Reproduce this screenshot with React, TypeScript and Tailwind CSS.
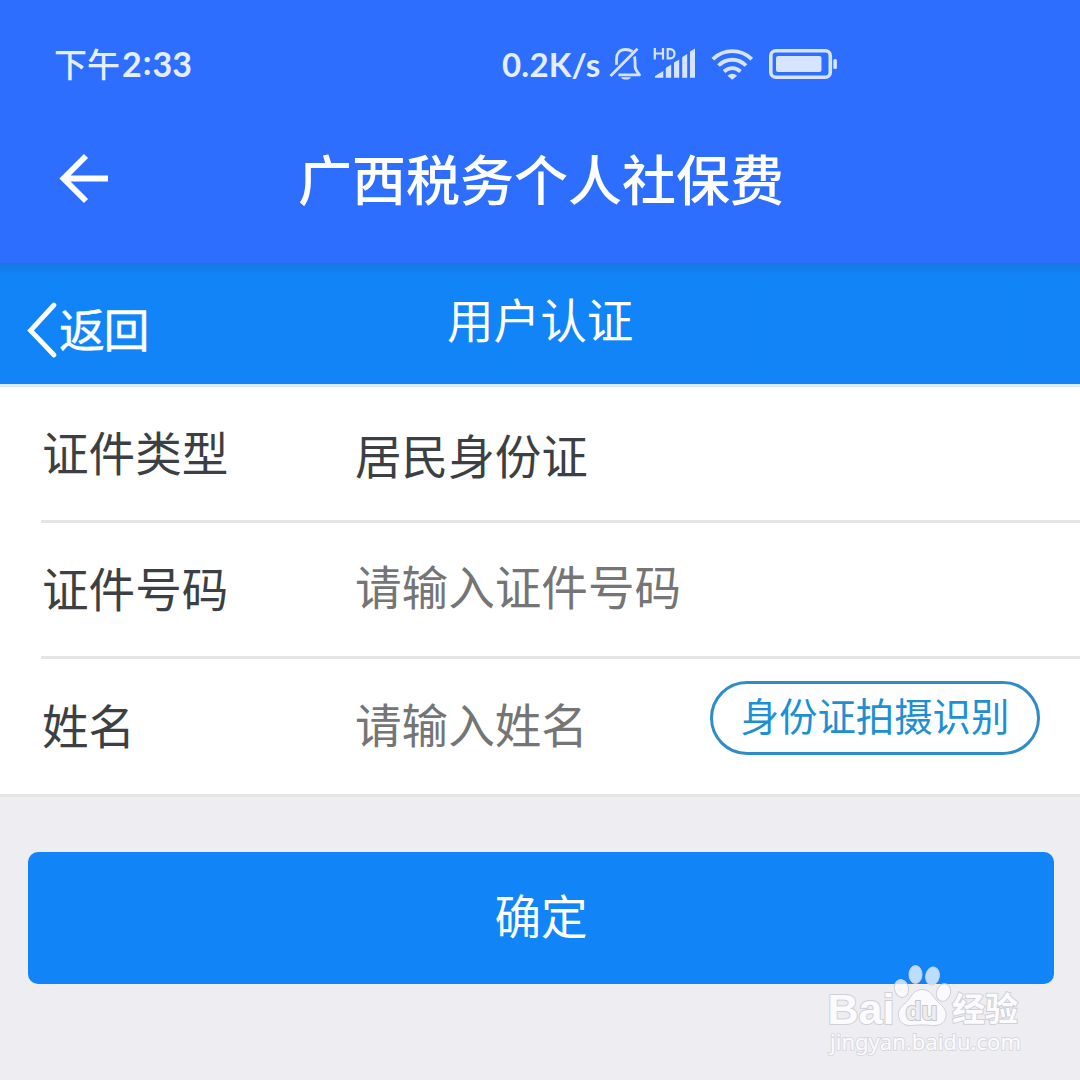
import React, { useState } from 'react';

const StatusIcons = () => (
  <div className="flex items-center">
    {/* muted bell */}
    <svg className="ml-[8px] h-[34px] w-[33px]" viewBox="609 47 33 34" fill="none" stroke="#d6e4ff" strokeWidth="2.8">
      <path d="M632.500 51.500C630 49.800 628 49.500 625.500 49.500c-5.800 0-9 4.200-9 9.700v5.500" />
      <path d="M634.500 56.500c.6 2 .6 6.500.6 10 0 3.500 2.400 5.500 4.400 8.400H618.500" strokeLinejoin="round" />
      <path d="M637.500 48.800L610.500 76" />
      <path d="M621 77.200h10c-1 3.200-9 3.200-10 0z" fill="#d6e4ff" stroke="none" />
    </svg>
    {/* HD signal */}
    <svg className="ml-[11px] h-[34px] w-[43px]" viewBox="653 47 43 34" fill="#d6e4ff">
      <g fill="none" stroke="#d6e4ff" strokeWidth="2.2">
        <path d="M654.800 48v11.500M663 48v11.500M654.800 53.500h8.200" />
        <path d="M667.700 49.100v9.300h2.300c6 0 6-9.300 0-9.300z" />
      </g>
      <path d="M655 77.800v-1.800l8.300-5V77.800zM665.800 77.800V68l5.400-3.500V77.800zM674 77.800V62.500l5.200-3V77.800zM682.200 77.800V57l5-3V77.800zM690 77.800V51.500l5-3V77.800z" />
    </svg>
    {/* wifi */}
    <svg className="ml-[15px] h-[34px] w-[43px]" viewBox="711 47 43 34" fill="none" stroke="#d6e4ff" strokeWidth="3.800">
      <path d="M712.800 59.200c11.200-10.700 27.800-10.700 39 0" />
      <path d="M718.500 65.500c8-7.700 19.500-7.700 27.500 0" />
      <path d="M724 71.500c5-4.600 11.600-4.600 16.500 0" />
      <path d="M727.500 75.800c2.800-2.800 6.800-2.800 9.600 0l-4.800 4z" fill="#d6e4ff" stroke="none" />
    </svg>
    {/* battery */}
    <svg className="ml-[14px] h-[34px] w-[71px]" viewBox="768 47 71 34">
      <rect x="770.800" y="50.800" width="59.500" height="26.500" rx="5" fill="none" stroke="#d6e4ff" strokeWidth="3.600" />
      <rect x="776" y="56" width="45.500" height="16" rx="2" fill="#d6e4ff" />
      <rect x="833.300" y="59" width="3.600" height="10" rx="1.600" fill="#d6e4ff" />
    </svg>
  </div>
);

const Watermark = () => (
  <svg className="absolute left-[820px] top-[955px] h-[110px] w-[215px]" viewBox="820 955 215 110">
    <g fill="#ffffff" fillOpacity="0.72" stroke="#cfcfd8" strokeWidth="1">
      <ellipse cx="901.500" cy="988.500" rx="7" ry="9" transform="rotate(-14 901.500 988.500)" />
      <ellipse cx="915.500" cy="974.500" rx="6.500" ry="9" />
      <ellipse cx="932.500" cy="976" rx="6.800" ry="9" transform="rotate(12 932.500 976)" />
      <ellipse cx="943.500" cy="992.500" rx="7" ry="9" transform="rotate(18 943.500 992.500)" />
      <path d="M922 989.500c-9 0-10.500 8-16 13-5.500 4.500-8.500 8-7.500 14 1.500 8 8.500 9.500 14 9 7-.8 12-.8 19 0 6 .6 13-1 14.500-9 1-6-2.500-9.500-7.500-14-5.500-5-7.500-13-16.500-13z" />
    </g>
    <g fill="#fbfbfd" stroke="#cfcfd8" strokeWidth="2" paintOrder="stroke" fontFamily="'Liberation Sans', Arial, sans-serif" fontWeight="700">
      <text x="827.500" y="1023.500" fontSize="42" textLength="67" lengthAdjust="spacingAndGlyphs">Bai</text>
      <text x="905.500" y="1020" fontSize="26" textLength="32" lengthAdjust="spacingAndGlyphs" fill="#ececf1" stroke="#c6c7ce">du</text>
      <text x="952" y="1021" fontSize="33" fontFamily="'Noto Sans CJK SC', sans-serif">经验</text>
    </g>
    <text
      x="830" y="1050" fontSize="22" textLength="191" lengthAdjust="spacingAndGlyphs"
      fontFamily="'Noto Sans', sans-serif" fill="#fbfbfd" stroke="#d8d8df" strokeWidth="2" paintOrder="stroke"
    >jingyan.baidu.com</text>
  </svg>
);

interface FieldRowProps {
  label: string;
  last?: boolean;
  children: React.ReactNode;
}

const FieldRow: React.FC<FieldRowProps> = ({ label, last, children }) => (
  <div className={last ? 'flex h-[135px] items-center' : 'flex h-[136px] items-center border-b-3 border-[#e5e5e5]'}>
    <span className="w-[314px] shrink-0 pb-[6px] pl-px">{label}</span>
    {children}
  </div>
);

const inputClass = 'h-[70px] min-w-0 bg-transparent outline-none placeholder:text-[#757575] placeholder:opacity-100';

export default function App() {
  const [idNumber, setIdNumber] = useState('');
  const [name, setName] = useState('');

  return (
    <div className="relative flex h-[1080px] w-[1080px] flex-col overflow-hidden bg-[#eeeef2] font-['Noto_Sans_CJK_SC',sans-serif] text-[46.6px] leading-[70px] text-[#3c3f43]">
      <header className="h-[263px] shrink-0 bg-[#2d6eff]">
        <div className="flex h-[128px] items-center text-[#e4eeff]">
          <span className="flex w-[502px] items-center pl-[54px] font-['Lato','Noto_Sans_CJK_SC',sans-serif] text-[33px] font-medium">
            下午
            <span className="ml-[2px] text-[34px] font-bold">2</span>
            <span className="mx-px mb-[5px] text-[34px] font-bold">:</span>
            <span className="text-[34px] font-bold">33</span>
          </span>
          <span className="w-[99px] font-['Lato','Noto_Sans_CJK_SC',sans-serif] text-[33px] font-bold tracking-[0.2px] whitespace-nowrap">0.2K/s</span>
          <StatusIcons />
        </div>
        <div className="flex h-[100px] items-center text-white">
          <button className="ml-[58px] w-[240px]">
            <svg className="h-[52px] w-[52px]" viewBox="0 0 52 52" fill="none" stroke="currentColor" strokeWidth="5.800">
              <path d="M28 4L5.500 26.500l22.500 22.500M6 26.500H50" />
            </svg>
          </button>
          <h1 className="text-[54px] font-medium">广西税务个人社保费</h1>
        </div>
      </header>

      <nav className="flex h-[121px] shrink-0 bg-[#1184f8] bg-linear-to-b from-[#1777df] from-0% to-[#1184f8] to-[12px] text-white">
        <button className="flex w-[447px] items-center pt-[13px] pl-[26px]">
          <svg className="h-[58px] w-[32px]" viewBox="0 0 32 58" fill="none" stroke="currentColor" strokeWidth="4.800" strokeLinecap="round">
            <path d="M28 4L4.500 29.500 28 54" />
          </svg>
          <span className="ml-px pb-[6px] text-[46px] tracking-[-1.400px] [-webkit-text-stroke:0.4px_white]">返回</span>
        </button>
        <h2 className="pt-[20px]">用户认证</h2>
      </nav>

      <section className="h-[413px] shrink-0 border-y-3 border-t-[#dcecf8] border-b-[#e5e5e5] bg-white pl-[41px]">
        <FieldRow label="证件类型">
          <span>居民身份证</span>
        </FieldRow>
        <FieldRow label="证件号码">
          <input className={`${inputClass} mb-[9px]`} placeholder="请输入证件号码" value={idNumber} onChange={(e) => setIdNumber(e.target.value)} />
        </FieldRow>
        <FieldRow label="姓名" last>
          <input className={`${inputClass} mb-[7px] w-[355px]`} placeholder="请输入姓名" value={name} onChange={(e) => setName(e.target.value)} />
          <button className="mb-[17px] flex h-[74px] w-[330px] items-center justify-center rounded-full border-3 border-[#2e8dc8] pb-[9px] text-[38.4px] text-[#1e8fd5]">
            身份证拍摄识别
          </button>
        </FieldRow>
      </section>

      <button className="mt-[55px] mr-[26px] ml-[28px] h-[132px] shrink-0 rounded-[10px] bg-[#1184f8] pb-[8px] text-white">确定</button>

      <Watermark />
    </div>
  );
}
